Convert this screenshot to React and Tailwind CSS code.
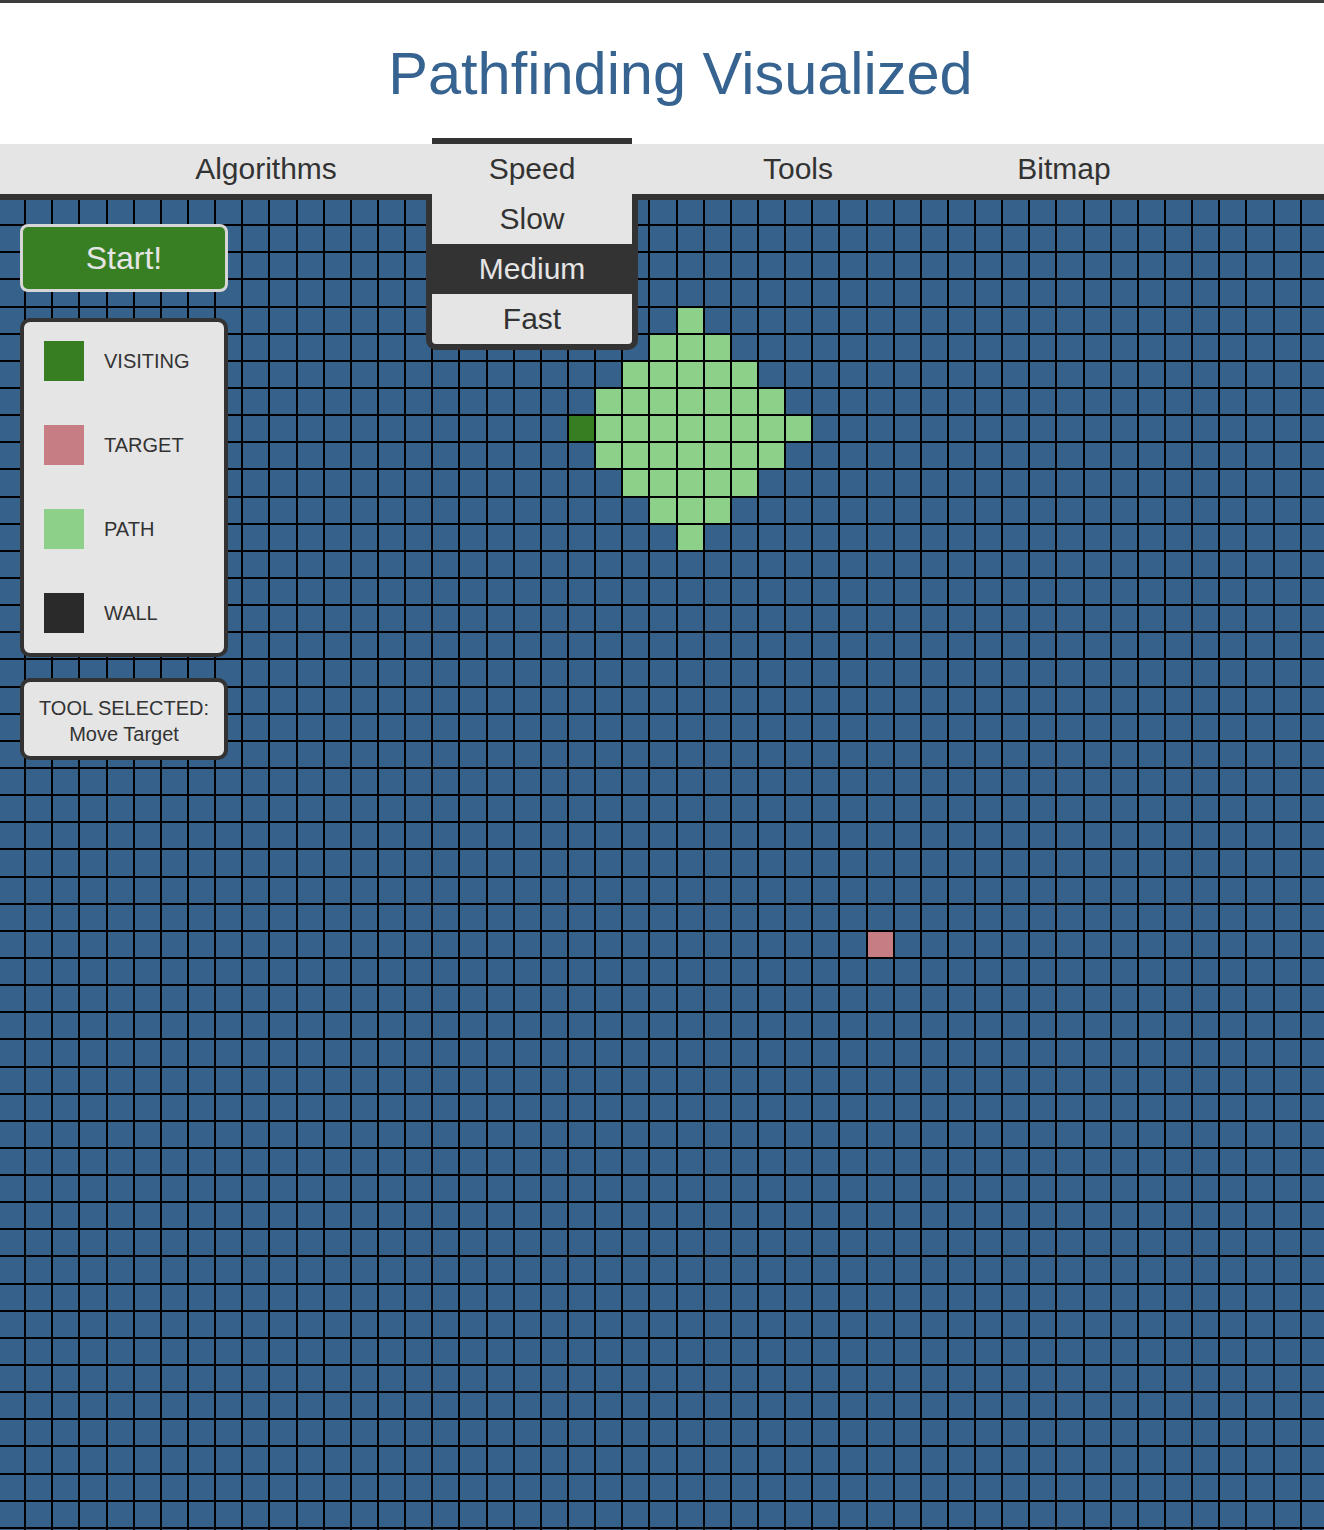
import React from 'react';

const ROWS = 50;
const COLS = 49;
const TARGET = [27, 32];
const VISITING = [8, 21];
const PATH_CENTER = [8, 25];

const cellColor = (r, c) => {
    if (r === TARGET[0] && c === TARGET[1]) return 'bg-[#c77d84]';
    if (r === VISITING[0] && c === VISITING[1]) return 'bg-[#377e22]';
    if (Math.abs(r - PATH_CENTER[0]) + Math.abs(c - PATH_CENTER[1]) <= 4) return 'bg-[#8dd08a]';
    return 'bg-[#35618a]';
};

const NavItem = ({ label, children, active }) => (
    <div className="relative w-[200px] h-[50px] leading-[50px] text-center text-[30px] text-[#333]">
        {active && <div className="absolute -top-[6px] left-0 right-0 h-[6px] bg-[#333]" />}
        {label}
        {children}
    </div>
);

const LegendItem = ({ color, label }) => (
    <div className="flex items-center gap-[20px]">
        <div className={`w-10 h-10 ${color}`} />
        <span className="text-[20px] text-[#333]">{label}</span>
    </div>
);

const App = () => {
    const cells = [];
    for (let r = 0; r < ROWS; r++) {
        for (let c = 0; c < COLS; c++) {
            cells.push(<div key={`${r}-${c}`} className={`border-r-2 border-b-2 border-black ${cellColor(r, c)}`} />);
        }
    }

    return (
        <div className="bg-white border-t-[3px] border-[#3c3c3c] overflow-hidden font-['Liberation_Sans',Arial,sans-serif]">
            <header className="h-[141px] flex items-center justify-center pl-[37px]">
                <h1 className="text-[59.5px] text-[#366390]">Pathfinding Visualized</h1>
            </header>

            <nav className="relative z-20 h-[56px] bg-[#e5e5e5] border-b-[6px] border-[#333] flex justify-center pl-[6px] gap-[66px]">
                <NavItem label="Algorithms" />
                <NavItem label="Speed" active>
                    <div className="absolute top-[50px] -left-[6px] w-[212px] border-[6px] border-t-0 border-[#333] rounded-b-[10px] bg-[#e5e5e5] overflow-hidden">
                        <div className="h-[50px] leading-[50px]">Slow</div>
                        <div className="h-[50px] leading-[50px] bg-[#333] text-[#e5e5e5]">Medium</div>
                        <div className="h-[50px] leading-[50px]">Fast</div>
                    </div>
                </NavItem>
                <NavItem label="Tools" />
                <NavItem label="Bitmap" />
            </nav>

            <main className="relative overflow-hidden">
                <div className="grid grid-cols-[repeat(49,27.15px)] auto-rows-[27.15px] -ml-[1px] -mt-[1px]">
                    {cells}
                </div>

                <div className="absolute top-[24px] left-[20px] w-[208px] flex flex-col">
                    <button className="h-[68px] border-[3px] border-[#d6d6d6] rounded-[8px] bg-[#387f23] text-[#e5e5e5] text-[32px]">
                        Start!
                    </button>

                    <div className="mt-[26px] border-4 border-[#333] rounded-[10px] bg-[#e5e5e5] pt-[19px] pb-[20px] px-[20px] flex flex-col gap-[44px]">
                        <LegendItem color="bg-[#377e22]" label="VISITING" />
                        <LegendItem color="bg-[#c77d84]" label="TARGET" />
                        <LegendItem color="bg-[#8dd08a]" label="PATH" />
                        <LegendItem color="bg-[#2a2a2a]" label="WALL" />
                    </div>

                    <div className="mt-[21px] border-4 border-[#333] rounded-[10px] bg-[#e5e5e5] pt-[13px] pb-[9px] text-center text-[20px] leading-[26px] text-[#333]">
                        <div>TOOL SELECTED:</div>
                        <div>Move Target</div>
                    </div>
                </div>
            </main>
        </div>
    );
};

export default App;
